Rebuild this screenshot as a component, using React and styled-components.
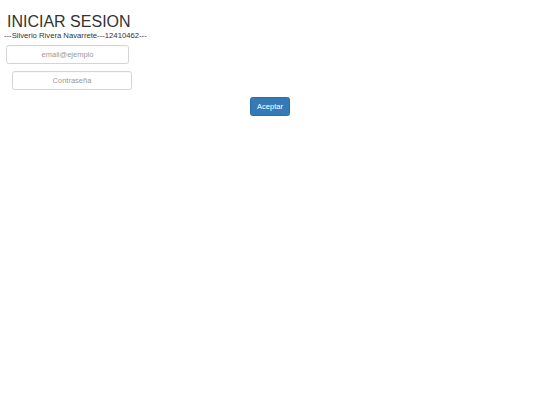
import React from "react";
import styled, { createGlobalStyle } from "styled-components";

const Global = createGlobalStyle`
  html, body { margin: 0; padding: 0; background: #fff; }
  body { font-family: "Liberation Sans", Arial, sans-serif; color: #333; }
`;

const Page = styled.div`
  display: flex;
  flex-direction: column;
  padding-top: 12.5px;
  width: 540px;
`;

const Title = styled.h2`
  margin: 0 0 0 7px;
  font-size: 16px;
  font-weight: 400;
  line-height: 18px;
  color: #333;
`;

const Sub = styled.p`
  margin: 0 0 0 4px;
  font-size: 7.7px;
  line-height: 10px;
  color: #333;
`;

const Input = styled.input`
  box-sizing: border-box;
  width: ${(p) => p.$w}px;
  height: 19px;
  margin: ${(p) => p.$mt}px 0 0 ${(p) => p.$ml}px;
  border: 1px solid #d4d4d4;
  border-radius: 2.5px;
  box-shadow: inset 0 0.5px 0.5px rgba(0, 0, 0, 0.05);
  font-family: "Liberation Sans", Arial, sans-serif;
  font-size: 7.5px;
  text-align: center;
  padding: 0;
  outline: none;
  background: #fff;
  &::placeholder { color: #999; }
`;

const Button = styled.button`
  box-sizing: border-box;
  align-self: center;
  width: 40px;
  height: 19px;
  margin-top: 7px;
  background: #337ab7;
  border: 1px solid #2e6da4;
  border-radius: 2.5px;
  color: #fff;
  font-family: "Liberation Sans", Arial, sans-serif;
  font-size: 7.5px;
  padding: 0;
`;

export default function App() {
  return (
    <>
      <Global />
      <Page>
        <Title>INICIAR SESION</Title>
        <Sub>---Silverio Rivera Navarrete---12410462---</Sub>
        <Input $w={123} $ml={6} $mt={4} placeholder="email@ejemplo" />
        <Input $w={120} $ml={12} $mt={7} type="password" placeholder="Contraseña" />
        <Button>Aceptar</Button>
      </Page>
    </>
  );
}
